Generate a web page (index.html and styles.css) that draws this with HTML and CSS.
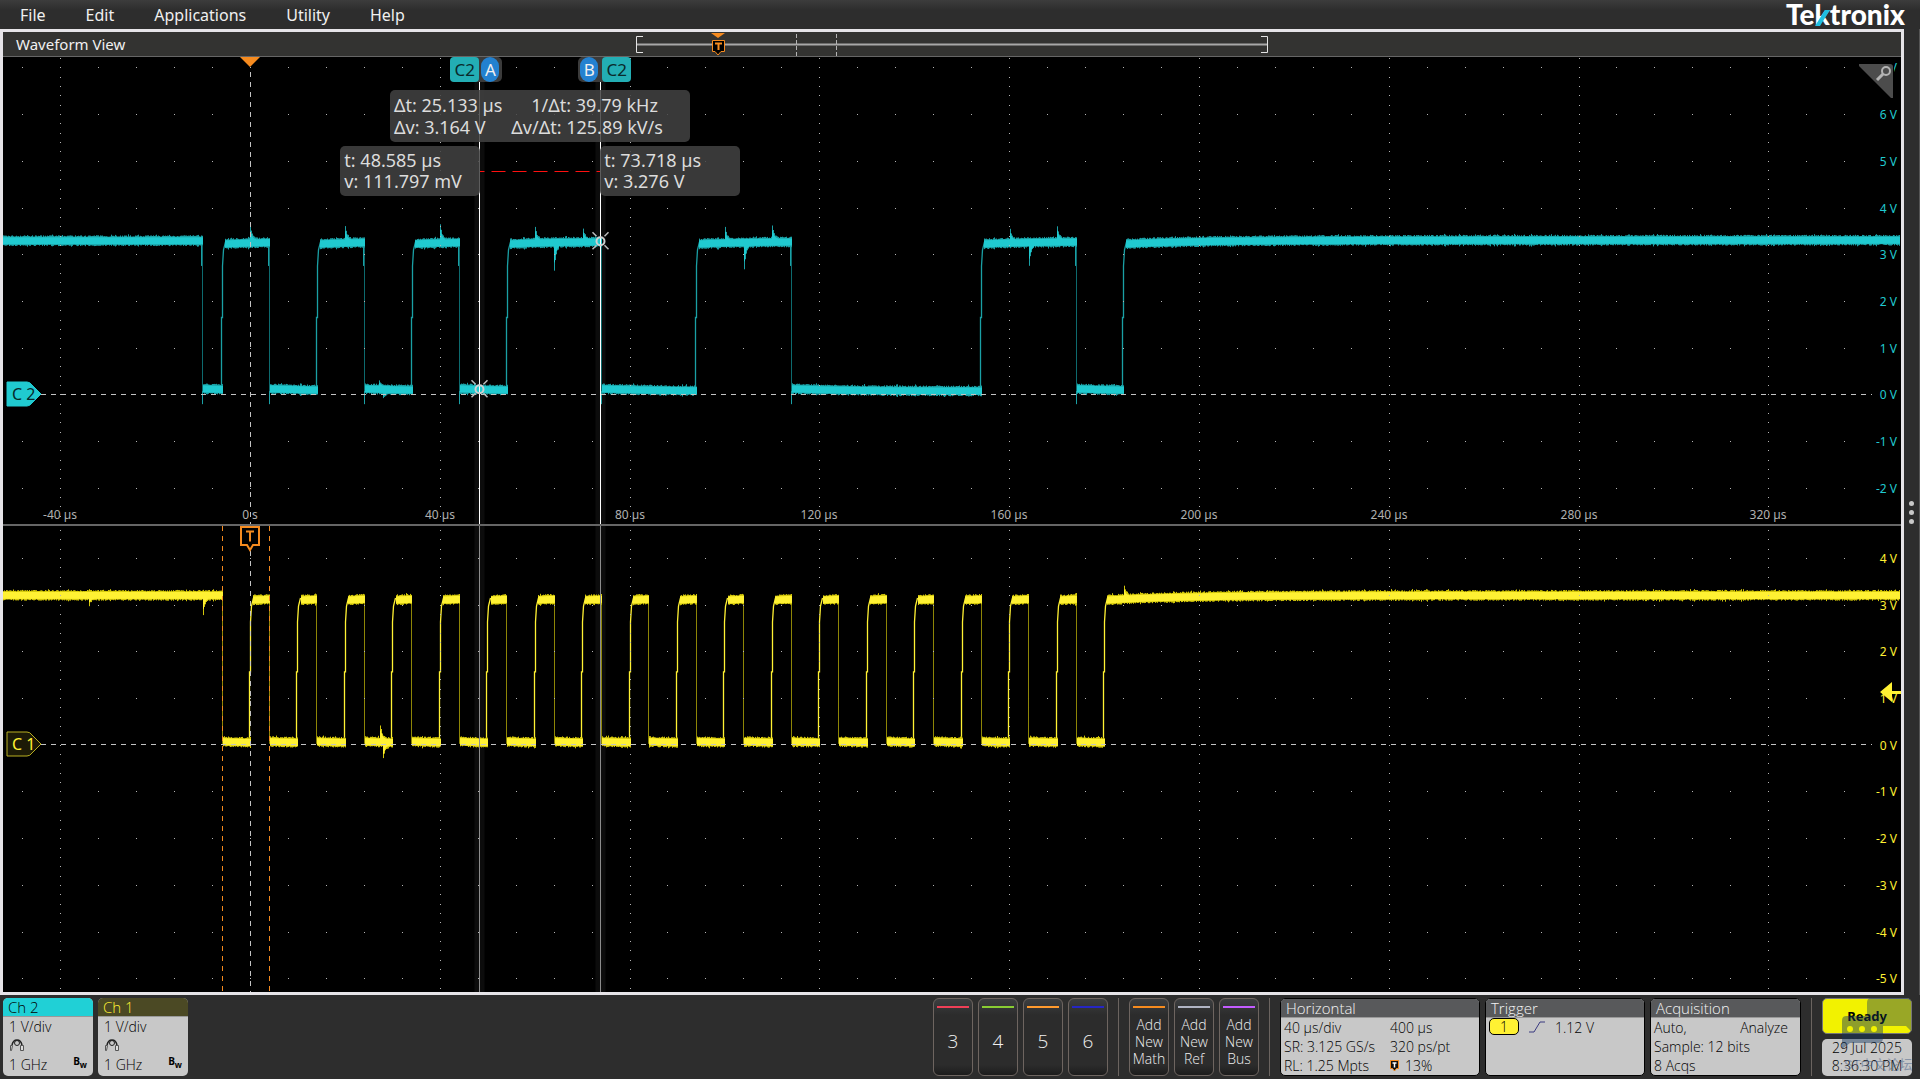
FILE: index.html
```html
<!DOCTYPE html>
<html lang="en">
  <head>
    <meta charset="utf-8">
    <title>Waveform View</title>
    <meta name="viewport" content="width=device-width, initial-scale=1">
    <link rel="icon" href="data:,">
    <link rel="stylesheet" href="styles.css">
  </head>
  <body>
    <header class="menubar">
      <nav class="menu">
        <button type="button">File</button>
        <button type="button">Edit</button>
        <button type="button">Applications</button>
        <button type="button">Utility</button>
        <button type="button">Help</button>
      </nav>
      <svg class="logo" width="124" height="29" viewBox="0 0 124 29" role="img" aria-label="Tektronix">
        <text x="1" y="25">Tektronix</text>
        <path d="M40 10h5L35 26h-5z" fill="#1fbfe0"/>
      </svg>
    </header>

    <div class="workspace">
      <main class="view">
        <div class="titlebar">
          <h1>Waveform View</h1>
          <svg class="overview" width="632" height="24" viewBox="0 0 632 24">
            <path d="M1 12.5H631" stroke="#a8a8a8" stroke-width="2"/>
            <path d="M7 4.500H.5V20.500H7M625 4.500H631.500V20.500H625" fill="none" stroke="#e4e4e4"/>
            <path d="M160.500 2V24M200.500 2V24" stroke="#b4b4b4" stroke-dasharray="4 2"/>
            <path d="M75 1H89L82 6z" fill="#f68b1f"/>
            <path d="M76.500 8.500H88.500V19.500H85L82 23L79 19.500H76.500z" fill="#000" stroke="#f68b1f"/>
            <path d="M79 11.500H86M82.500 11V18" stroke="#f68b1f" stroke-width="2"/>
          </svg>
        </div>

        <section class="pane pane-c2">
          <svg class="plot" id="plot2"></svg>
          <div class="cursor cursor-a">
            <span class="tag"><b class="src">C2</b><b class="name">A</b></span>
            <p class="readout">t: 48.585 µs<br>v: 111.797 mV</p>
          </div>
          <div class="cursor cursor-b">
            <span class="tag"><b class="name">B</b><b class="src">C2</b></span>
            <p class="readout">t: 73.718 µs<br>v: 3.276 V</p>
          </div>
          <div class="delta">
            <p>Δt: 25.133 µs<br>Δv: 3.164 V</p>
            <p class="rate">1/Δt: 39.79 kHz<br>Δv/Δt: 125.89 kV/s</p>
          </div>
          <button class="zoom" type="button" aria-label="Zoom">
            <svg width="35" height="35" viewBox="0 0 35 35">
              <path d="M0 0H31Q34 0 34 3V34H32L0 2z" fill="#4c4c4c"/>
              <circle cx="27" cy="7" r="4" fill="none" stroke="#b4b4b4" stroke-width="2"/>
              <path d="M24 10L18 16" stroke="#b4b4b4" stroke-width="3"/>
            </svg>
          </button>
        </section>

        <section class="pane pane-c1">
          <svg class="plot" id="plot1"></svg>
        </section>
      </main>
      <aside class="drawer">
        <button type="button" aria-label="Open results bar"><i></i><i></i><i></i></button>
      </aside>
    </div>

    <footer class="settings">
      <button class="badge ch ch2" type="button">
        <span class="head">Ch 2</span>
        <span class="body">
          <span>1 V/div</span>
          <svg class="probe" width="16" height="13" viewBox="0 0 16 13"><path d="M3 6Q4 1 8 1T13 6" fill="none" stroke="#222" stroke-width="1.500"/><circle cx="8" cy="4" r="2.500" fill="none" stroke="#222"/><path d="M1.500 6.500h2l-1 5h-1zM11.500 6.500h3v5h-3z" fill="#ddd" stroke="#555"/></svg>
          <span class="split"><span>1 GHz</span><b>B<sub>w</sub></b></span>
        </span>
      </button>
      <button class="badge ch ch1" type="button">
        <span class="head">Ch 1</span>
        <span class="body">
          <span>1 V/div</span>
          <svg class="probe" width="16" height="13" viewBox="0 0 16 13"><path d="M3 6Q4 1 8 1T13 6" fill="none" stroke="#222" stroke-width="1.500"/><circle cx="8" cy="4" r="2.500" fill="none" stroke="#222"/><path d="M1.500 6.500h2l-1 5h-1zM11.500 6.500h3v5h-3z" fill="#ddd" stroke="#555"/></svg>
          <span class="split"><span>1 GHz</span><b>B<sub>w</sub></b></span>
        </span>
      </button>

      <div class="group adders">
        <button class="add red" type="button">3</button>
        <button class="add green" type="button">4</button>
        <button class="add amber" type="button">5</button>
        <button class="add blue" type="button">6</button>
      </div>
      <div class="group">
        <button class="add new orange" type="button"><span>Add<br>New<br>Math</span></button>
        <button class="add new silver" type="button"><span>Add<br>New<br>Ref</span></button>
        <button class="add new violet" type="button"><span>Add<br>New<br>Bus</span></button>
      </div>
      <div class="group">
        <button class="badge info horizontal" type="button">
          <span class="head">Horizontal</span>
          <span class="body cols">
            <span>40 µs/div</span><span>400 µs</span>
            <span>SR: 3.125 GS/s</span><span>320 ps/pt</span>
            <span>RL: 1.25 Mpts</span>
            <span class="pos"><svg width="9" height="12" viewBox="0 0 9 12"><path d="M.500.500h8v8H6.500L4.500 11L2.500 8.500h-2z" fill="#111" stroke="#f68b1f"/><path d="M2.500 3h4M4.500 2.500V7.500" stroke="#fff" stroke-width="1.500"/></svg>13%</span>
          </span>
        </button>
        <button class="badge info trigger" type="button">
          <span class="head">Trigger</span>
          <span class="body trig">
            <span class="source">1</span>
            <svg width="16" height="12" viewBox="0 0 16 12"><path d="M0 11H5L11 1H16" fill="none" stroke="#3a3a80"/></svg>
            <span>1.12 V</span>
          </span>
        </button>
        <button class="badge info acquisition" type="button">
          <span class="head">Acquisition</span>
          <span class="body">
            <span class="split"><span>Auto,</span><span>Analyze</span></span>
            <span>Sample: 12 bits</span>
            <span>8 Acqs</span>
          </span>
        </button>
      </div>
      <div class="group status">
        <button class="ready" type="button">Ready</button>
        <time datetime="2025-07-29T20:36:30">29 Jul 2025<br>8:36:30 PM</time>
        <svg class="forum" width="72" height="80" viewBox="0 0 72 80">
          <path d="M31 0H66Q71 0 71 5V33L66 28H43V18H27V5Q27 0 31 0z" fill="#14375f" opacity=".4"/>
          <path d="M6 18H38Q43 18 43 23V40Q43 45 38 45H10L2 51V23Q2 18 6 18z" fill="#14375f" opacity=".45"/>
          <g fill="#f2f200"><circle cx="10" cy="31" r="3"/><circle cx="22" cy="31" r="3"/><circle cx="34" cy="31" r="3"/></g>
          <text x="4" y="71">ST中文论坛</text>
        </svg>
      </div>
    </footer>
    <script src="scope.js"></script>
  </body>
</html>
```
FILE: styles.css
```css
* {
  box-sizing: border-box;
}
body {
  margin: 0;
  height: 100vh;
  display: flex;
  flex-direction: column;
  overflow: hidden;
  background: #2d2d2d;
  color: #f0f0f0;
  font-family: "Noto Sans", sans-serif;
}
button {
  margin: 0;
  padding: 0;
  border: 0;
  background: none;
  color: inherit;
  font: inherit;
  text-align: left;
}
p {
  margin: 0;
}

/* menu */
.menubar {
  flex: none;
  height: 29px;
  display: flex;
  justify-content: space-between;
  padding-right: 11px;
  background: linear-gradient(#3c3c3c, #2d2d2d 10px);
}
.menu {
  display: flex;
}
.menu button {
  padding: 0 20px;
  font-size: 16px;
}
.logo {
  overflow: visible;
}
.logo text {
  font: 900 28px Lato, sans-serif;
  fill: #fff;
}

/* waveform view */
.workspace {
  flex: 1;
  min-height: 0;
  display: flex;
}
.view {
  flex: 1;
  min-width: 0;
  display: flex;
  flex-direction: column;
  border: 3px solid #e6e4e8;
}
.titlebar {
  flex: none;
  display: grid;
  grid-template-columns: 1fr auto 1fr;
  align-items: center;
  height: 25px;
  padding: 0 13px;
  background: #333331;
  border-bottom: 1px solid #666;
}
.titlebar h1 {
  margin: 0;
  font-size: 15px;
  font-weight: normal;
}
.pane {
  position: relative;
  flex: 1;
  min-height: 0;
  background: #000;
}
.pane-c1 {
  border-top: 2px solid #666;
}
.plot {
  display: block;
  width: 100%;
  height: 100%;
}
.plot text {
  font-size: 12px;
}
.plot .flag {
  font-size: 16px;
}
.cursor {
  position: absolute;
  top: 0;
}
.cursor-a {
  left: 25.150%;
}
.cursor-b {
  left: 31.470%;
}
.tag {
  position: absolute;
  top: 0;
  display: flex;
  height: 25px;
  border-radius: 5px;
  background: #3b3b3b;
  font-size: 17px;
  line-height: 25px;
  text-align: center;
}
.tag b {
  font-weight: normal;
}
.cursor-a .tag {
  left: -30px;
  gap: 2px;
  padding-right: 3px;
}
.cursor-b .tag {
  right: -31px;
  gap: 4px;
  padding-left: 2px;
}
.src {
  width: 29px;
  border-radius: 4px;
  background: #23aeb4;
  color: #0a2a2c;
}
.name {
  width: 18px;
  border-radius: 9px;
  background: #2381d0;
}
.readout,
.delta {
  position: absolute;
  padding: 4px;
  border-radius: 5px;
  background: rgba(66, 66, 66, .86);
  color: #dcdcdc;
  font-size: 18px;
  line-height: 21px;
}
.readout {
  top: 89px;
  width: 140px;
  height: 50px;
}
.cursor-a .readout {
  right: 0;
}
.cursor-b .readout {
  left: 0;
}
.delta {
  top: 33px;
  left: 20.390%;
  display: flex;
  gap: 9px;
  width: 300px;
  height: 52px;
  line-height: 22px;
}
.delta p {
  white-space: nowrap;
}
.rate {
  text-indent: 20px;
}
.zoom {
  position: absolute;
  top: 0;
  right: 7px;
  padding-top: 7px;
  background: #000;
}
.zoom svg {
  display: block;
}
.drawer {
  flex: none;
  width: 16px;
  display: flex;
  justify-content: center;
  align-items: center;
  border-right: 1px solid #555;
}
.drawer button {
  display: flex;
  flex-direction: column;
  gap: 4px;
}
.drawer i {
  width: 5px;
  height: 5px;
  border-radius: 50%;
  background: #c8c8c8;
}

/* settings bar */
.settings {
  flex: none;
  height: 84px;
  display: flex;
  gap: 5px;
  padding: 3px 8px 3px 3px;
  font-family: "Open Sans", sans-serif;
  font-weight: 300;
  font-size: 14px;
}
.badge {
  display: flex;
  flex-direction: column;
  height: 78px;
  border-radius: 5px;
  overflow: hidden;
  background: #c8c8c8;
  color: #000;
  line-height: 19px;
}
.head {
  flex: none;
  height: 19px;
  padding: 0 5px;
  font-size: 15px;
  border-bottom: 1px solid #999;
}
.ch {
  width: 90px;
}
.ch2 .head {
  background: #20d0d6;
}
.ch1 .head {
  background: #4b4924;
  color: #fff133;
}
.body {
  flex: 1;
  display: flex;
  flex-direction: column;
  padding: 0 6px;
}
.probe {
  margin: 3px 0;
}
.split {
  display: flex;
  justify-content: space-between;
}
.split b {
  font-size: 10px;
  font-weight: 700;
  line-height: 12px;
}
.group {
  display: flex;
  gap: 5px;
}
.group + .group {
  margin-left: 5px;
  padding-left: 10px;
  border-left: 1px solid #6b6460;
}
.adders {
  margin-left: auto;
}
.add {
  display: flex;
  flex-direction: column;
  align-items: center;
  width: 40px;
  height: 78px;
  border: 1px solid #6e6560;
  border-radius: 6px;
  background: linear-gradient(#3c3e40, #2c2c2c 16px, #2c2c2c 66px, #1c1c1c);
  text-align: center;
  font-size: 19px;
  line-height: 17px;
}
.add::before {
  content: "";
  width: 32px;
  height: 2px;
  margin: 7px 0 25px;
}
.new {
  font-size: 14px;
}
.new::before {
  margin-bottom: 8px;
}
.red::before { background: #ee3f57; }
.green::before { background: #88cc33; }
.amber::before { background: #ff9a2e; }
.blue::before { background: #2626c4; }
.orange::before { background: #f68b1f; }
.silver::before { background: #b0b4c4; }
.violet::before { background: #c25cff; }
.info {
  border: 1px solid #000;
}
.info .head {
  background: #58595b;
  color: #f4f4f4;
}
.info .body {
  padding: 0 3px;
}
.horizontal {
  width: 200px;
}
.trigger {
  width: 160px;
}
.acquisition {
  width: 151px;
}
.acquisition .split {
  padding-right: 9px;
}
.info .cols {
  display: grid;
  grid-template-columns: 106px 1fr;
  grid-auto-rows: 19px;
  white-space: nowrap;
}
.pos {
  display: flex;
  gap: 6px;
  align-items: center;
}
.info .trig {
  flex-direction: row;
  align-items: flex-start;
  gap: 10px;
}
.trig svg {
  margin-top: 3px;
}
.source {
  width: 30px;
  height: 17px;
  border: 1px solid #000;
  border-radius: 5px;
  background: #fff133;
  line-height: 15px;
  text-align: center;
}
.status {
  position: relative;
  flex-direction: column;
}
.ready,
time {
  width: 90px;
  border-radius: 5px;
  text-align: center;
  color: #000;
}
.ready {
  height: 36px;
  border: 1px solid #777;
  background: #f2f200;
  font-family: "Noto Sans", sans-serif;
  font-weight: 700;
  font-size: 13px;
}
time {
  height: 37px;
  background: #c8c8c8;
  line-height: 18px;
}
.forum {
  position: absolute;
  top: 0;
  right: 0;
  pointer-events: none;
}
.forum text {
  font: 13px "Liberation Sans", "Noto Sans CJK SC", sans-serif;
  fill: #4a6288;
  opacity: .5;
}
```
FILE: scope.js
```js
var START = -52.14; // left edge, in µs
var SPAN = 400;
var CYAN = { core: '#20cad0', edge: '#1aa0a5', dim: '#0d6a6e' };
var YELLOW = { core: '#fff133', edge: '#d2c60a', dim: '#8d8506' };

var ch2 = {
  id: 'plot2', zero: 0.7223, color: CYAN, label: 'C 2', solid: true,
  start: 3.29, high: 3.22, end: 3.3, low: 0.07,
  edges: [-10.1, -5.9, 4.1, 14.1, 24.1, 34.1, 44.1, 54.1, 73.9, 94, 114, 154, 174, 183.9],
  spikes: [[0, 0.25], [20, 0.25], [40, 0.3], [60, 0.25], [64, -0.5], [70, 0.25], [100, 0.25],
           [104, -0.5], [110, 0.25], [160, 0.25], [164, -0.5], [170, 0.25], [27, 0.12], [28, -0.1]],
  undershoot: 0.28, volts: [7, -2]
};
var ch1 = {
  id: 'plot1', zero: 0.4685, color: YELLOW, label: 'C 1', solid: false,
  start: 3.2, high: 3.1, end: 3.2, low: 0.02,
  edges: [-5.9],
  spikes: [[-34, -0.1], [-10.1, -0.42], [27.4, 0.25], [28, -0.25], [184, 0.25]],
  undershoot: 0, volts: [4, -5]
};
for (var n = 0; n < 18; n++) {
  ch1.edges.push(n * 10, n * 10 + 4);
}
ch1.edges.push(180);

var seed = 7;
function noise() {
  seed = (seed * 16807) % 2147483647;
  return seed / 2147483647;
}

function path(d, stroke, extra) {
  return '<path d="' + d + '" fill="none" stroke="' + stroke + '" ' + (extra || '') + '/>';
}

function grid(ch, w, h, X, Y) {
  var dots = '';
  var zero = Math.floor(Y(0));
  for (var v = ch.volts[1]; v <= ch.volts[0]; v++) {
    if (v == 0) continue;
    for (var t = -48; t < 344; t += 8) {
      dots += 'M' + Math.floor(X(t)) + ' ' + (Math.round(Y(v)) + 0.5) + 'h1';
    }
  }
  for (var t = -40; t <= 320; t += 40) {
    if (t == 0) continue;
    for (var i = ch.volts[1] * 5 - 4; i <= ch.volts[0] * 5 + 4; i++) {
      dots += 'M' + Math.floor(X(t)) + ' ' + (Math.round(Y(i / 5)) + 0.5) + 'h1';
    }
  }
  return path(dots, '#b4b4b4') +
    path('M38 ' + (zero + 0.5) + 'H' + (w - 29), '#c4c4c4', 'stroke-dasharray="5 5"') +
    path('M' + (Math.floor(X(0)) + 0.5) + ' 15V' + h, '#c4c4c4', 'stroke-dasharray="5 5"');
}

function trace(ch, w, X, Y) {
  var outer = '', core = '', rise = '', fall = '', lip = '';
  for (var x = 0; x < w - 1; x++) {
    var t = START + x * SPAN / w;
    var k = 0;
    while (k < ch.edges.length && ch.edges[k] <= t) k++;
    var v, since = k ? t - ch.edges[k - 1] : 0;
    if (k == 0) v = ch.start;
    else if (k % 2) v = ch.low + 0.05 * Math.exp(-since / 12);
    else if (k == ch.edges.length) v = ch.end - (ch.end - ch.high) * Math.exp(-since / 16);
    else v = ch.high + 0.05 * (1 - Math.exp(-since / 10));
    // skip the columns where the rising edge is still settling
    if (k && k % 2 == 0 && since < 0.5) continue;
    var y = Y(v), up = 0, down = 0;
    ch.spikes.forEach(function (s) {
      var d = t - s[0];
      if (d < -0.1 || d > 1) return;
      var a = (Y(0) - Y(1)) * s[1] * Math.exp(-Math.max(d, 0) * 3);
      if (a > 0) up = a; else down = -a;
    });
    var bump = noise() > 0.93 ? 1 : 0;
    var top = y - 4 - noise() * 1.4 - up - bump;
    var bottom = y + 4 + noise() * 1.4 + down + bump;
    outer += 'M' + (x + 0.5) + ' ' + top.toFixed(1) + 'V' + bottom.toFixed(1);
    core += 'M' + (x + 0.5) + ' ' + (y - 3.4 - up * 0.7).toFixed(1) + 'V' + (y + 3.6 + down * 0.7).toFixed(1);
  }
  ch.edges.forEach(function (e, k) {
    var x = Math.floor(X(e)) + 0.5;
    var hi = Y(ch.high), lo = Y(ch.low);
    if (k % 2) {
      var mid = lo + (hi - lo) * 0.5;
      rise += 'M' + (x - 1) + ' ' + lo + 'V' + mid + 'H' + x + 'V' + (hi + 22) +
        'L' + (x + 1) + ' ' + (hi + 6) + 'L' + (x + 3) + ' ' + (hi - 2);
    } else {
      fall += 'M' + x + ' ' + hi + 'V' + Y(ch.low - ch.undershoot);
      if (ch.undershoot) {
        lip += 'M' + (x - 1) + ' ' + hi + 'V' + (hi + 22) +
          'M' + x + ' ' + lo + 'V' + Y(ch.low - ch.undershoot);
      }
    }
  });
  return path(fall, ch.color.dim) + path(lip, ch.color.edge) +
    path(rise, ch.solid ? ch.color.edge : ch.color.core, 'stroke-width="1.3"') +
    path(outer, ch.color.edge) + path(core, ch.color.core);
}

function star(x, y) {
  return '<circle cx="' + x + '" cy="' + y + '" r="4" fill="none" stroke="#d0d0d0" stroke-width="2"/>' +
    path('M' + (x - 8) + ' ' + (y - 9) + 'l4 4m8 9l4 4m0 -17l-4 4m-8 9l-4 4', '#bdbdbd', 'stroke-width="1.5"');
}

function draw(ch) {
  var svg = document.getElementById(ch.id);
  var w = svg.clientWidth, h = svg.clientHeight;
  var X = function (t) { return (t - START) * w / SPAN; };
  var Y = function (v) { return h * ch.zero - v * h / 10; };
  var a = Math.floor(X(48.585)) - 0.5, b = Math.floor(X(73.718)) + 0.5;
  var zero = Math.floor(Y(0)), origin = Math.floor(X(0));
  var out = '<rect x="' + (a - 5) + '" width="10" height="' + h + '" fill="#0c0c0c"/>' +
    '<rect x="' + (b - 5) + '" width="10" height="' + h + '" fill="#0c0c0c"/>';

  for (var v = ch.volts[1]; v <= ch.volts[0]; v++) {
    out += '<text x="' + (w - 4) + '" y="' + (Math.round(Y(v)) + 5) + '" text-anchor="end" fill="' +
      ch.color.core + '">' + v + ' V</text>';
  }
  out += trace(ch, w, X, Y) + grid(ch, w, h, X, Y);

  if (ch == ch2) {
    for (var t = -40; t <= 320; t += 40) {
      out += '<text x="' + Math.floor(X(t)) + '" y="' + (h - 5) + '" text-anchor="middle" fill="#b0b0b0">' +
        (t ? t + ' µs' : '0 s') + '</text>';
    }
    out += '<path d="M' + (origin - 10) + ' 0h20l-10 10z" fill="#f68b1f"/>' +
      path('M' + a + ' 114.5H' + b, '#ff1010', 'stroke-dasharray="14 7" stroke-dashoffset="9"') +
      path('M' + a + ' 25V' + h + 'M' + b + ' 25V' + h, '#fff') +
      star(a, Y(0.11)) + star(b, Y(3.276));
  } else {
    out += path('M' + a + ' 0V' + h + 'M' + b + ' 0V' + h, '#8c8c8c');
    [-5.9, 4.1].forEach(function (e) {
      var x = Math.floor(X(e)) + 0.5;
      out += path('M' + x + ' 0V' + h, '#f68b1f', 'stroke-dasharray="5 5"');
    });
    // trigger position and level
    out += '<path d="M' + (origin - 9) + ' 1h18v18h-6l-3 5l-3 -5h-6z" fill="#000" stroke="#f68b1f" stroke-width="2"/>' +
      path('M' + (origin - 4) + ' 5.5h8m-4 0v10', '#f68b1f', 'stroke-width="2"');
    var level = Math.round(Y(1.12));
    out += '<path d="M' + (w - 21) + ' ' + level + 'l12 -10v9h9v3h-9v8z" fill="' + ch.color.core + '"/>';
  }

  // channel flag at the zero line
  out += '<path d="M4 ' + (zero - 12) + 'h20q3 0 5 3l9 9l-9 9q-2 3 -5 3h-20z" fill="' +
    (ch.solid ? ch.color.core : '#1c1a06') + '" stroke="' + (ch.solid ? ch.color.core : '#b8ae20') + '"/>' +
    '<text class="flag" x="9" y="' + (zero + 6) + '" fill="' + (ch.solid ? '#06282a' : ch.color.core) + '">' +
    ch.label + '</text>';
  svg.innerHTML = out;
}

function drawAll() {
  seed = 7;
  draw(ch2);
  draw(ch1);
}
window.addEventListener('resize', drawAll);
drawAll();
```
